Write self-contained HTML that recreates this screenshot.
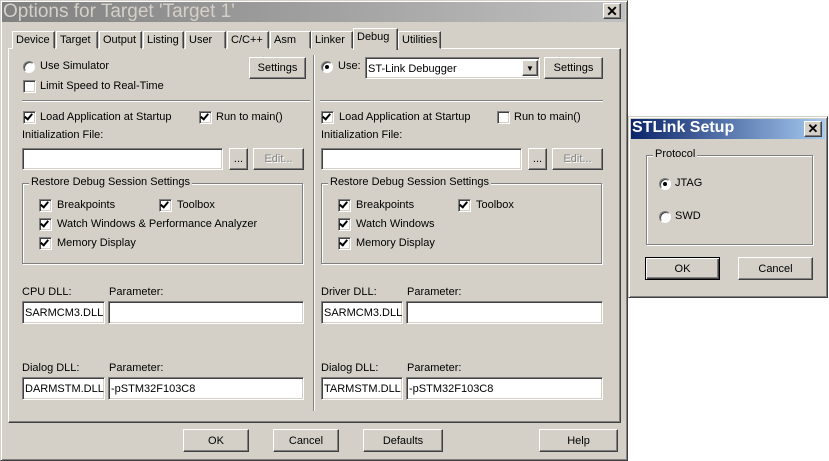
<!DOCTYPE html>
<html><head><meta charset="utf-8"><style>
*{box-sizing:border-box}
body{margin:0;width:829px;height:461px;background:#fff;position:relative;overflow:hidden;font-family:"Liberation Sans",sans-serif;font-size:11px;color:#000}
.a{position:absolute}
.dlg{background:#d4d0c8;border:1px solid;border-color:#d4d0c8 #404040 #404040 #d4d0c8;box-shadow:inset 1px 1px 0 #fff,inset -1px -1px 0 #808080}
.btn{position:absolute;background:#d4d0c8;border:1px solid;border-color:#fff #404040 #404040 #fff;box-shadow:inset -1px -1px 0 #808080;text-align:center;display:flex;align-items:center;justify-content:center;font-size:11px}
.btn.def{border:1px solid #000;box-shadow:inset 1px 1px 0 #fff,inset -1px -1px 0 #404040,inset -2px -2px 0 #808080}
.in{position:absolute;background:#fff;border:1px solid;border-color:#808080 #fff #fff #808080;box-shadow:inset 1px 1px 0 #404040,inset -1px -1px 0 #d4d0c8;padding:5px 0 0 2px;font-size:11px;white-space:nowrap;overflow:hidden}
.cb{position:absolute;width:13px;height:13px;background:#fff;border:1px solid;border-color:#808080 #fff #fff #808080;box-shadow:inset 1px 1px 0 #404040,inset -1px -1px 0 #d4d0c8}
.cb.on::after{content:"";position:absolute;left:2px;top:0px;width:3px;height:6px;border:solid #000;border-width:0 2px 2px 0;transform:rotate(40deg)}
.rb{position:absolute;width:12px;height:12px;border-radius:50%;background:#fff;border:1px solid;border-color:#808080 #fff #fff #808080;box-shadow:inset 1px 1px 0 #404040}
.rb.on::after{content:"";position:absolute;left:3px;top:3px;width:4px;height:4px;border-radius:50%;background:#000}
.t{position:absolute;white-space:nowrap}
.grp{position:absolute;border:1px solid #808080;box-shadow:1px 1px 0 #fff,inset 1px 1px 0 #fff}
.gl{position:absolute;background:#d4d0c8;padding:0 2px;white-space:nowrap}
.tab{position:absolute;top:31px;height:18px;border:1px solid;border-color:#fff #404040 transparent #fff;box-shadow:inset -1px 0 0 #808080;padding:2px 3px 0;font-size:11px;background:#d4d0c8}
.dis{color:#808080;text-shadow:1px 1px 0 #fff}
</style></head><body>
<div class="a dlg" style="left:0;top:0;width:628px;height:461px"></div>
<div class="a" style="left:2px;top:2px;width:623px;height:20px;background:linear-gradient(90deg,#808080,#c0c0c0)"></div>
<div class="t" style="left:3px;top:1px;font-size:19px;color:#d4d0c8">Options for Target 'Target 1'</div>
<div class="btn" style="left:603px;top:3px;width:18px;height:16px;font-weight:bold;font-size:14px">✕</div>

<div class="a" style="left:8px;top:48px;width:613px;height:375px;border:1px solid;border-color:#fff #404040 #404040 #fff;box-shadow:inset -1px -1px 0 #808080"></div>
<div class="tab" style="left:12px;width:43px">Device</div>
<div class="tab" style="left:56px;width:42px">Target</div>
<div class="tab" style="left:99px;width:43px">Output</div>
<div class="tab" style="left:143px;width:41px">Listing</div>
<div class="tab" style="left:185px;width:41px">User</div>
<div class="tab" style="left:227px;width:42px">C/C++</div>
<div class="tab" style="left:270px;width:41px">Asm</div>
<div class="tab" style="left:311px;width:42px">Linker</div>
<div class="tab" style="left:353px;top:28px;height:22px;width:45px;border-bottom:none;z-index:2">Debug</div>
<div class="tab" style="left:398px;width:43px">Utilities</div>

<div class="a" style="left:313px;top:55px;width:2px;height:356px;border-left:1px solid #808080;border-right:1px solid #fff"></div>
<div class="a" style="left:22px;top:100px;width:288px;height:2px;border-top:1px solid #808080;border-bottom:1px solid #fff"></div>
<div class="a" style="left:320px;top:100px;width:283px;height:2px;border-top:1px solid #808080;border-bottom:1px solid #fff"></div>

<!-- left -->
<div class="rb" style="left:23px;top:61px"></div><div class="t" style="left:40px;top:60px">Use Simulator</div>
<div class="btn" style="left:249px;top:57px;width:57px;height:22px">Settings</div>
<div class="cb" style="left:23px;top:80px"></div><div class="t" style="left:40px;top:80px">Limit Speed to Real-Time</div>
<div class="cb on" style="left:23px;top:111px"></div><div class="t" style="left:40px;top:111px">Load Application at Startup</div>
<div class="cb on" style="left:199px;top:111px"></div><div class="t" style="left:216px;top:111px">Run to main()</div>
<div class="t" style="left:22px;top:129px">Initialization File:</div>
<div class="in" style="left:22px;top:148px;width:201px;height:22px"></div>
<div class="btn" style="left:229px;top:148px;width:19px;height:22px">...</div>
<div class="btn dis" style="left:253px;top:148px;width:51px;height:22px">Edit...</div>
<div class="grp" style="left:22px;top:183px;width:281px;height:81px"></div>
<div class="gl" style="left:29px;top:176px">Restore Debug Session Settings</div>
<div class="cb on" style="left:39px;top:199px"></div><div class="t" style="left:57px;top:199px">Breakpoints</div>
<div class="cb on" style="left:159px;top:199px"></div><div class="t" style="left:177px;top:199px">Toolbox</div>
<div class="cb on" style="left:39px;top:218px"></div><div class="t" style="left:57px;top:218px">Watch Windows &amp; Performance Analyzer</div>
<div class="cb on" style="left:39px;top:237px"></div><div class="t" style="left:57px;top:237px">Memory Display</div>
<div class="t" style="left:22px;top:286px">CPU DLL:</div><div class="t" style="left:109px;top:286px">Parameter:</div>
<div class="in" style="left:22px;top:301px;width:83px;height:23px">SARMCM3.DLL</div>
<div class="in" style="left:108px;top:301px;width:196px;height:23px"></div>
<div class="t" style="left:22px;top:362px">Dialog DLL:</div><div class="t" style="left:109px;top:362px">Parameter:</div>
<div class="in" style="left:22px;top:377px;width:83px;height:23px">DARMSTM.DLL</div>
<div class="in" style="left:108px;top:377px;width:196px;height:23px">-pSTM32F103C8</div>

<!-- right -->
<div class="rb on" style="left:321px;top:61px"></div><div class="t" style="left:338px;top:60px">Use:</div>
<div class="in" style="left:365px;top:57px;width:175px;height:22px;padding-top:5px">ST-Link Debugger</div>
<div class="btn" style="left:522px;top:60px;width:16px;height:16px;font-size:8px">▼</div>
<div class="btn" style="left:544px;top:57px;width:59px;height:22px">Settings</div>
<div class="cb on" style="left:321px;top:111px"></div><div class="t" style="left:339px;top:111px">Load Application at Startup</div>
<div class="cb" style="left:497px;top:111px"></div><div class="t" style="left:514px;top:111px">Run to main()</div>
<div class="t" style="left:321px;top:129px">Initialization File:</div>
<div class="in" style="left:321px;top:148px;width:201px;height:22px"></div>
<div class="btn" style="left:528px;top:148px;width:19px;height:22px">...</div>
<div class="btn dis" style="left:552px;top:148px;width:51px;height:22px">Edit...</div>
<div class="grp" style="left:321px;top:183px;width:281px;height:81px"></div>
<div class="gl" style="left:328px;top:176px">Restore Debug Session Settings</div>
<div class="cb on" style="left:338px;top:199px"></div><div class="t" style="left:356px;top:199px">Breakpoints</div>
<div class="cb on" style="left:458px;top:199px"></div><div class="t" style="left:476px;top:199px">Toolbox</div>
<div class="cb on" style="left:338px;top:218px"></div><div class="t" style="left:356px;top:218px">Watch Windows</div>
<div class="cb on" style="left:338px;top:237px"></div><div class="t" style="left:356px;top:237px">Memory Display</div>
<div class="t" style="left:321px;top:286px">Driver DLL:</div><div class="t" style="left:407px;top:286px">Parameter:</div>
<div class="in" style="left:321px;top:301px;width:82px;height:23px">SARMCM3.DLL</div>
<div class="in" style="left:406px;top:301px;width:197px;height:23px"></div>
<div class="t" style="left:321px;top:362px">Dialog DLL:</div><div class="t" style="left:407px;top:362px">Parameter:</div>
<div class="in" style="left:321px;top:377px;width:82px;height:23px">TARMSTM.DLL</div>
<div class="in" style="left:406px;top:377px;width:197px;height:23px">-pSTM32F103C8</div>

<div class="btn" style="left:183px;top:429px;width:66px;height:23px">OK</div>
<div class="btn" style="left:273px;top:429px;width:66px;height:23px">Cancel</div>
<div class="btn" style="left:363px;top:429px;width:80px;height:23px">Defaults</div>
<div class="btn" style="left:539px;top:429px;width:79px;height:23px">Help</div>

<!-- STLink -->
<div class="a dlg" style="left:628px;top:116px;width:200px;height:182px"></div>
<div class="a" style="left:631px;top:119px;width:194px;height:20px;background:linear-gradient(90deg,#0a246a,#a6caf0)"></div>
<div class="t" style="left:632px;top:119px;font-size:16px;font-weight:bold;color:#fff">STLink Setup</div>
<div class="btn" style="left:804px;top:121px;width:18px;height:16px;font-weight:bold;font-size:13px">✕</div>
<div class="grp" style="left:646px;top:155px;width:167px;height:90px"></div>
<div class="gl" style="left:653px;top:148px">Protocol</div>
<div class="rb on" style="left:659px;top:178px"></div><div class="t" style="left:675px;top:177px">JTAG</div>
<div class="rb" style="left:659px;top:211px"></div><div class="t" style="left:675px;top:210px">SWD</div>
<div class="btn def" style="left:645px;top:257px;width:75px;height:23px">OK</div>
<div class="btn" style="left:738px;top:257px;width:75px;height:23px">Cancel</div>
</body></html>
